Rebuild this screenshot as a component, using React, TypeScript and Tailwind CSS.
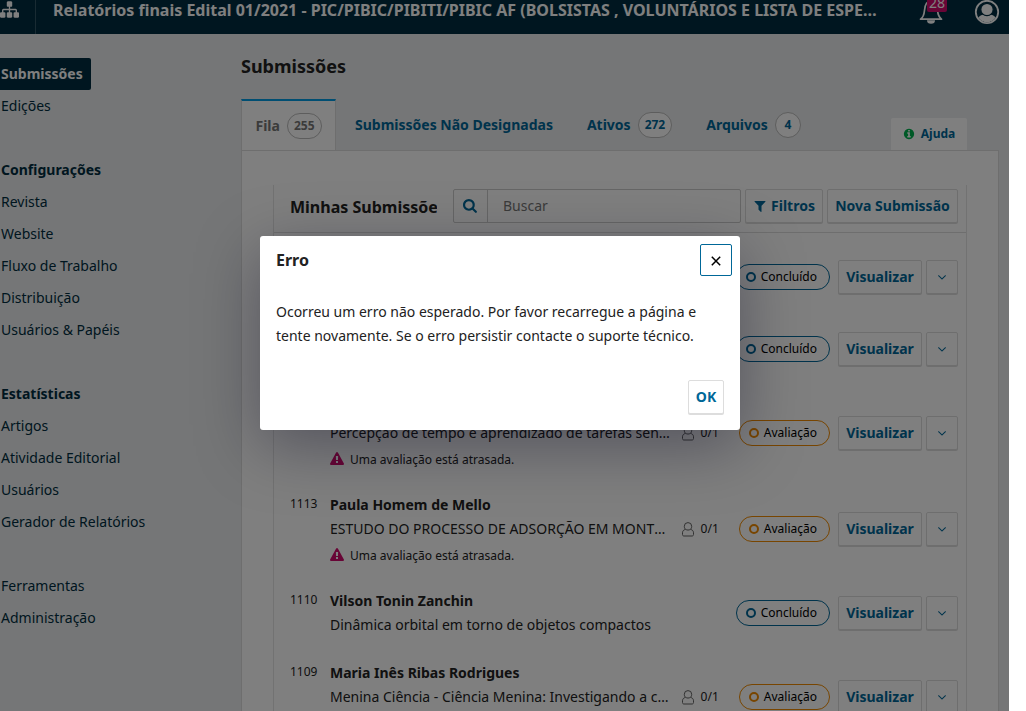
import React from "react";

const paths = {
  sitemap:
    "M1792 1248v320q0 40-28 68t-68 28h-320q-40 0-68-28t-28-68v-320q0-40 28-68t68-28h96v-192h-512v192h96q40 0 68 28t28 68v320q0 40-28 68t-68 28h-320q-40 0-68-28t-28-68v-320q0-40 28-68t68-28h96v-192h-512v192h96q40 0 68 28t28 68v320q0 40-28 68t-68 28h-320q-40 0-68-28t-28-68v-320q0-40 28-68t68-28h96v-192q0-52 38-90t90-38h512v-192h-96q-40 0-68-28t-28-68v-320q0-40 28-68t68-28h320q40 0 68 28t28 68v320q0 40-28 68t-68 28h-96v192h512q52 0 90 38t38 90v192h96q40 0 68 28t28 68z",
  search:
    "M1152 704q0-185-131.5-316.5t-316.5-131.5-316.5 131.5-131.5 316.5 131.5 316.5 316.5 131.5 316.5-131.5 131.5-316.5zm512 832q0 52-38 90t-90 38q-54 0-90-38l-343-342q-179 124-399 124-143 0-273.5-55.5t-225-150-150-225-55.5-273.5 55.5-273.5 150-225 225-150 273.5-55.5 273.5 55.5 225 150 150 225 55.5 273.5q0 220-124 399l343 343q37 37 37 90z",
  filter:
    "M1595 295q17 41-14 70l-493 493v742q0 42-39 59-13 5-25 5-27 0-45-19l-256-256q-19-19-19-45v-486l-493-493q-31-29-14-70 17-39 59-39h1280q42 0 59 39z",
  info: "M1152 1376v-160q0-14-9-23t-23-9h-96v-512q0-14-9-23t-23-9h-320q-14 0-23 9t-9 23v160q0 14 9 23t23 9h96v320h-96q-14 0-23 9t-9 23v160q0 14 9 23t23 9h448q14 0 23-9t9-23zm-128-896v-160q0-14-9-23t-23-9h-192q-14 0-23 9t-9 23v160q0 14 9 23t23 9h192q14 0 23-9t9-23zm640 416q0 209-103 385.5t-279.5 279.5-385.5 103-385.5-103-279.5-279.5-103-385.5 103-385.5 279.5-279.5 385.5-103 385.5 103 279.5 279.5 103 385.5z",
  warning:
    "M1024 1375v-190q0-14-9.5-23.5t-22.5-9.5h-192q-13 0-22.5 9.5t-9.5 23.5v190q0 14 9.5 23.5t22.5 9.5h192q13 0 22.5-9.5t9.5-23.5zm-2-374l18-459q0-12-10-19-13-11-24-11h-220q-11 0-24 11-10 7-10 21l17 457q0 10 10 16.5t24 6.5h185q14 0 23.5-6.5t10.5-16.5zm-14-934l768 1408q35 63-2 126-17 29-46.5 46t-63.5 17h-1536q-34 0-63.5-17t-46.5-46q-37-63-2-126l768-1408q17-31 47-49t65-18 65 18 47 49z",
  down: "M1395 736q0 13-10 23l-466 466q-10 10-23 10t-23-10l-466-466q-10-10-10-23t10-23l50-50q10-10 23-10t23 10l393 393 393-393q10-10 23-10t23 10l50 50q10 10 10 23z",
};

function Icon({ name, className }: { name: keyof typeof paths; className: string }) {
  return (
    <svg viewBox="0 0 1792 1792" fill="currentColor" aria-hidden="true" className={`shrink-0 ${className}`}>
      <path d={paths[name]} />
    </svg>
  );
}

const buttonStyle =
  "flex h-[34px] shrink-0 items-center justify-center rounded-[2px] border border-[#ddd] bg-white font-bold text-[#006798] shadow-[0_1px_0_#ddd]";

const navGroups = [
  { heading: "Configurações", items: ["Revista", "Website", "Fluxo de Trabalho", "Distribuição", "Usuários & Papéis"] },
  { heading: "Estatísticas", items: ["Artigos", "Atividade Editorial", "Usuários", "Gerador de Relatórios"] },
];

const tabs = [
  { label: "Submissões Não Designadas" },
  { label: "Ativos", count: 272 },
  { label: "Arquivos", count: 4 },
];

type Row = { id: number; author: string; title: string; review?: boolean; late?: boolean };

const rows: Row[] = [
  { id: 1116, author: "", title: "" },
  { id: 1115, author: "", title: "" },
  { id: 1114, author: "", title: "Percepção de tempo e aprendizado de tarefas sensoriais", review: true, late: true },
  { id: 1113, author: "Paula Homem de Mello", title: "ESTUDO DO PROCESSO DE ADSORÇÃO EM MONTMORILONITA", review: true, late: true },
  { id: 1110, author: "Vilson Tonin Zanchin", title: "Dinâmica orbital em torno de objetos compactos" },
  { id: 1109, author: "Maria Inês Ribas Rodrigues", title: "Menina Ciência - Ciência Menina: Investigando a contribuição", review: true, late: true },
];

function NavLink({ children }: { children: React.ReactNode }) {
  return (
    <a href="#" className="block h-8 pl-px leading-8">
      {children}
    </a>
  );
}

function Count({ value }: { value: number }) {
  return (
    <span className="ml-[7px] flex h-[26px] min-w-[26px] items-center justify-center rounded-full border border-[#bbb] bg-white px-1.5 text-xs">
      {value}
    </span>
  );
}

function Header() {
  return (
    <header className="flex h-[34px] shrink-0 bg-[#002c40] text-white">
      <a href="#" aria-label="Contextos" className="flex w-9 shrink-0 justify-start border-r border-white/20">
        <Icon name="sitemap" className="size-[19px]" />
      </a>
      <div className="min-w-0 flex-1 pl-[17px]">
        <h1 className="w-[832px] max-w-full truncate text-base leading-5 font-bold">
          Relatórios finais Edital 01/2021 - PIC/PIBIC/PIBITI/PIBIC AF (BOLSISTAS , VOLUNTÁRIOS E LISTA DE ESPERA)
        </h1>
      </div>
      <button aria-label="Tarefas" className="relative h-6 w-6 shrink-0">
        <svg viewBox="0 0 24 24" fill="none" className="size-6" aria-hidden="true">
          <path d="M1.500 19.200h21c-2.600-1.700-3.600-4.500-4-9C18 4 16 1 12 1S6 4 5.500 10.200c-.4 4.500-1.400 7.300-4 9z" stroke="currentColor" strokeWidth="1.700" strokeLinejoin="round" />
          <path d="M8 20.200h8a4 3.500 0 0 1-8 0z" fill="currentColor" />
        </svg>
        <span className="absolute -top-[6px] left-2 rounded-[2px] bg-[#d00a6c] px-[2px] text-sm leading-[18px]">28</span>
      </button>
      <button aria-label="Conta" className="mr-[9px] ml-[31px] h-6 shrink-0">
        <svg viewBox="0 0 26 26" className="size-[26px]" aria-hidden="true">
          <circle cx="13" cy="12" r="11.200" fill="none" stroke="currentColor" strokeWidth="1.800" />
          <path d="M4.400 17.500c1.700-2.400 4.300-3.200 8.600-3.200s6.900.8 8.600 3.200a10.300 10.300 0 0 1-17.200 0z" fill="currentColor" />
          <circle cx="13" cy="9.500" r="6.200" fill="currentColor" stroke="#002c40" strokeWidth="1.200" />
        </svg>
      </button>
    </header>
  );
}

function Sidebar() {
  return (
    <nav className="w-[241px] shrink-0 pt-6 text-[#002c40]">
      <a href="#" className="block h-8 w-[91px] rounded-r-[2px] bg-[#002c40] pl-px leading-8 font-bold text-white">
        Submissões
      </a>
      <NavLink>Edições</NavLink>
      {navGroups.map((group) => (
        <section key={group.heading} className="pt-8">
          <h2 className="h-8 pl-px leading-8 font-bold">{group.heading}</h2>
          {group.items.map((item) => (
            <NavLink key={item}>{item}</NavLink>
          ))}
        </section>
      ))}
      <div className="pt-8">
        <NavLink>Ferramentas</NavLink>
        <NavLink>Administração</NavLink>
      </div>
    </nav>
  );
}

function SubmissionRow({ row }: { row: Row }) {
  return (
    <li className="flex items-center py-3 pr-2 pl-4">
      <span className="w-10 shrink-0 self-start text-xs leading-[22px]">{row.id}</span>
      <div className="min-w-0 flex-1">
        <div className="h-6 leading-6 font-bold">{row.author}</div>
        <div className="h-6 truncate leading-6">{row.title}</div>
        {row.late && (
          <div className="flex h-6 items-end text-xs leading-[18px]">
            <Icon name="warning" className="mr-1.5 mb-[3px] size-[14px] text-[#d00a6c]" />
            Uma avaliação está atrasada.
          </div>
        )}
      </div>
      {row.review && (
        <span className="mr-5 ml-2 flex w-[37px] shrink-0 items-center justify-between text-xs">
          <svg viewBox="0 0 12 15" fill="none" stroke="currentColor" className="h-[15px] w-3 opacity-70" aria-hidden="true">
            <path d="M3.500 7.300C2.600 6.500 2.300 5.500 2.300 4.300a3.700 3.700 0 0 1 7.400 0c0 1.200-.3 2.200-1.200 3C10.500 8 11.500 9 11.500 10.800v1.700c0 1-.6 1.500-1.500 1.500H2c-.9 0-1.500-.5-1.500-1.500v-1.700C.5 9 1.500 8 3.500 7.300c1.500 1 3.500 1 5 0" />
          </svg>
          0/1
        </span>
      )}
      <span
        className={`mr-2 flex h-[26px] shrink-0 items-center rounded-full border pr-3 pl-[9px] text-xs text-black ${
          row.review ? "border-[#f08a00]" : "border-[#006798]"
        }`}
      >
        <span className={`mr-[5px] size-[10px] rounded-full border-2 ${row.review ? "border-[#f08a00]" : "border-[#006798]"}`} />
        {row.review ? "Avaliação" : "Concluído"}
      </span>
      <button className={`${buttonStyle} mr-1 w-[84px]`}>Visualizar</button>
      <button aria-label="Mais" className={`${buttonStyle} w-8`}>
        <Icon name="down" className="size-[14px]" />
      </button>
    </li>
  );
}

function Main() {
  return (
    <main className="min-w-0 flex-1 pr-[10px]">
      <h2 className="pt-5 text-lg leading-6 font-bold">Submissões</h2>
      <div className="mt-[21px] flex h-[51px] items-stretch font-bold text-[#006798]">
        <button className="flex w-[95px] items-center justify-center border-x border-t-2 border-x-[#ddd] border-t-[#009de5] bg-white text-[#777]">
          Fila
          <Count value={255} />
        </button>
        {tabs.map((tab) => (
          <button key={tab.label} className="mr-[15px] ml-[19px] flex items-center">
            {tab.label}
            {tab.count !== undefined && <Count value={tab.count} />}
          </button>
        ))}
        <button className="mr-8 ml-auto flex h-8 w-[76px] items-center justify-center gap-1.5 self-end rounded-t-[2px] bg-white text-xs">
          <Icon name="info" className="size-3 text-[#00b24e]" />
          Ajuda
        </button>
      </div>
      <section className="border border-[#ddd] bg-white px-[31px] pt-[34px]">
        <div className="border border-t-0 border-[#e4e4e4]">
          <div className="flex h-12 items-start border-b border-[#ddd] pt-1 pr-2 pl-4">
            <h3 className="w-[147px] shrink-0 overflow-hidden text-base leading-9 font-bold whitespace-nowrap">Minhas Submissõe</h3>
            <div className="ml-4 flex h-[34px] min-w-0 flex-1 rounded-[2px] border border-[#ccc]">
              <label htmlFor="search" className="flex w-[34px] shrink-0 items-center justify-center border-r border-[#ccc] text-[#006798]">
                <Icon name="search" className="size-[15px]" />
                <span className="sr-only">Buscar</span>
              </label>
              <input id="search" type="search" placeholder="Buscar" className="min-w-0 flex-1 px-[15px] placeholder:text-[#777]" />
            </div>
            <button className={`${buttonStyle} ml-1 w-[78px] gap-1`}>
              <Icon name="filter" className="size-[14px]" />
              Filtros
            </button>
            <button className={`${buttonStyle} ml-1 w-[131px]`}>Nova Submissão</button>
          </div>
          <ul className="pt-2">
            {rows.map((row) => (
              <SubmissionRow key={row.id} row={row} />
            ))}
          </ul>
        </div>
      </section>
    </main>
  );
}

function ErrorDialog() {
  return (
    <div className="absolute inset-0 flex items-start justify-center bg-black/50 pt-59 pr-[9px]">
      <div
        role="dialog"
        aria-modal="true"
        aria-labelledby="error-title"
        className="w-[480px] rounded-[3px] bg-white px-4 pt-2 pb-4 shadow-[0_16px_64px_rgba(0,0,30,0.35)]"
      >
        <div className="-mr-2 flex items-center justify-between">
          <h2 id="error-title" className="text-base font-bold">
            Erro
          </h2>
          <button aria-label="Fechar" className="flex size-8 items-center justify-center rounded-[2px] border border-[#006798]">
            <svg viewBox="0 0 10 10" className="mt-0.5 size-[10px]" stroke="#000" strokeWidth="1.500" aria-hidden="true">
              <path d="M.8.8l8.400 8.400M9.200.8L.8 9.200" />
            </svg>
          </button>
        </div>
        <p className="mt-6 leading-6">
          Ocorreu um erro não esperado. Por favor recarregue a página e tente novamente. Se o erro persistir contacte o suporte técnico.
        </p>
        <div className="mt-8 flex justify-end">
          <button className={`${buttonStyle} w-9`}>OK</button>
        </div>
      </div>
    </div>
  );
}

export default function App() {
  return (
    <div className="h-screen overflow-hidden bg-white pr-[17px] font-['Noto_Sans',sans-serif] text-sm text-[#222]">
      <div className="relative flex h-full flex-col overflow-hidden bg-[#eaedee]">
        <Header />
        <div className="flex flex-1">
          <Sidebar />
          <Main />
        </div>
        <ErrorDialog />
      </div>
    </div>
  );
}
